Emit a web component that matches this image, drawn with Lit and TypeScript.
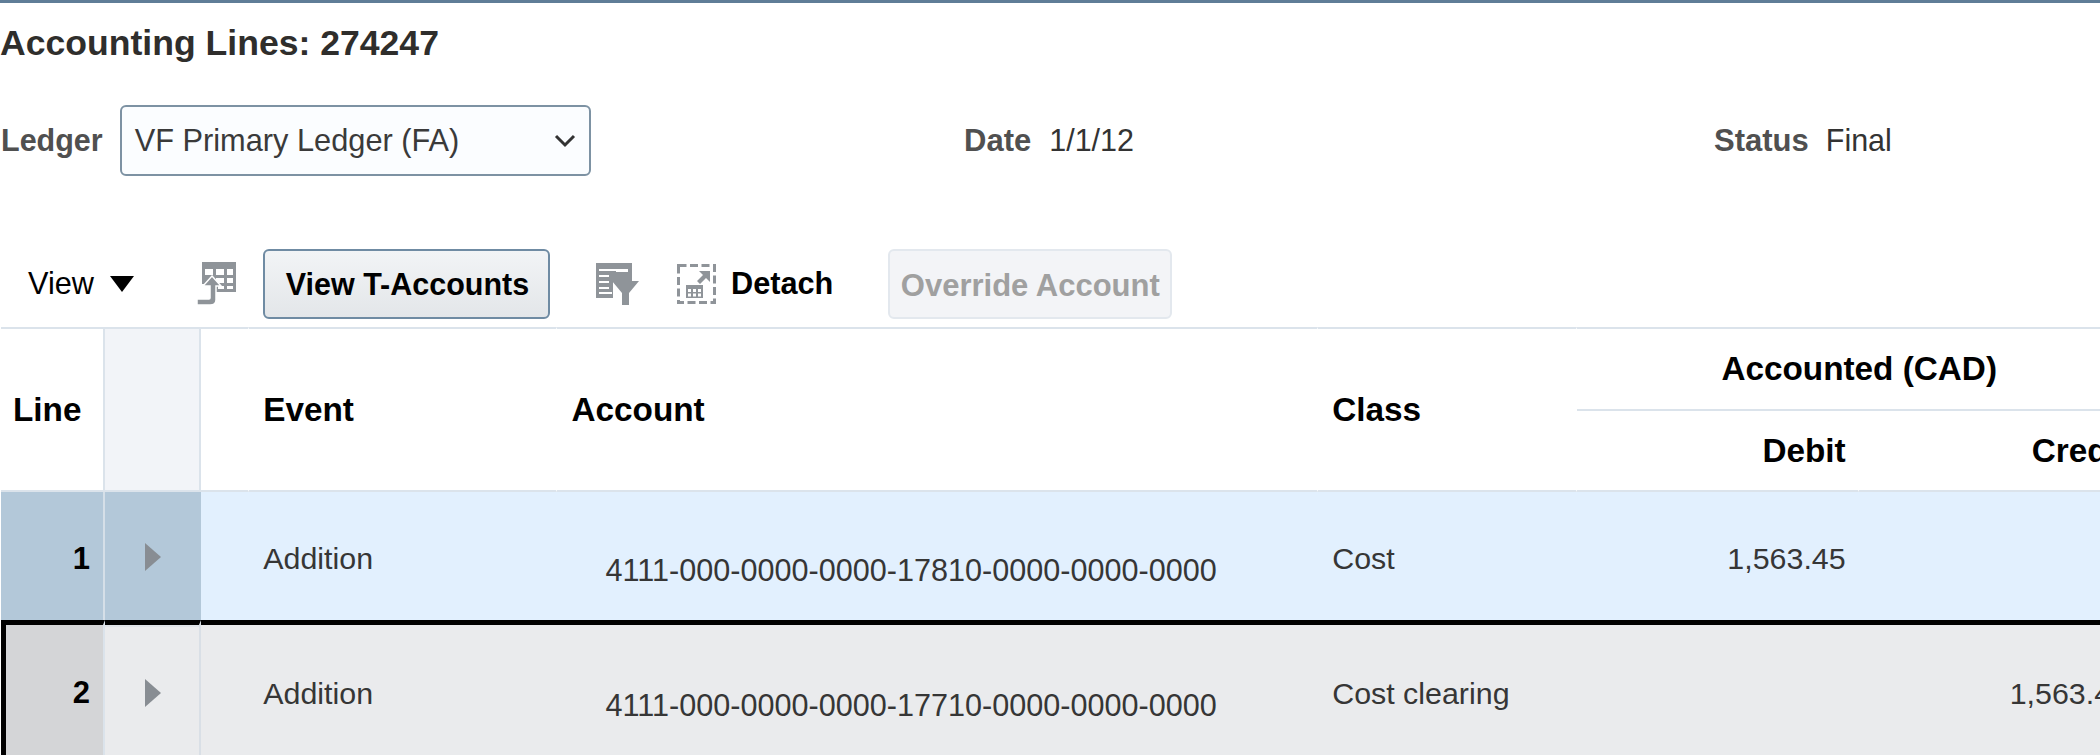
import { LitElement, html, css } from "lit";
import { customElement } from "lit/decorators.js";

const arrow = html`<svg class="tri" width="16" height="28" viewBox="0 0 16 28"><path d="M0 0L16 14L0 28Z" fill="#888d93"/></svg>`;

@customElement("app-root")
export class AppRoot extends LitElement {
  static styles = css`
    :host { display: block; width: 2100px; height: 755px; overflow: hidden; background: #fff; font-family: "Liberation Sans", Arial, sans-serif; color: #333; border-top: 3px solid #5f7d97; box-sizing: border-box; }
    h1 { margin: 0; height: 81px; padding-top: 20px; box-sizing: border-box; font-size: 35.6px; line-height: 41px; font-weight: 700; color: #2f2e2c; }
    .form { display: grid; grid-template-columns: 964px 750px 1fr; height: 70px; align-items: center; margin-top: 21px; font-size: 30.5px; }
    .field { display: flex; align-items: center; }
    .lbl { font-weight: 700; color: #505050; margin-right: 18px; font-size: 31px; }
    .first { padding-left: 1px; }
    .first .lbl { margin-right: 17px; font-size: 30.5px; }
    .status { margin-right: 17px; }
    .sel { width: 471px; height: 71px; box-sizing: border-box; border: 2px solid #7d92a3; border-radius: 6px; background: #fbfdff; display: flex; align-items: center; justify-content: space-between; padding: 0 12px 0 13px; color: #3a3a3a; font-size: 30.75px; }
    .bar { display: flex; align-items: center; height: 72px; margin-top: 73px; font-size: 30.7px; color: #000; }
    .view { margin-left: 28px; display: flex; align-items: center; gap: 16px; }
    .btn { box-sizing: border-box; height: 70px; display: flex; align-items: center; justify-content: center; font-weight: 700; border-radius: 6px; }
    .primary { width: 287px; border: 2px solid #6f8ba3; background: linear-gradient(#f2f4f6, #e3e6e9); margin-left: 27px; padding-left: 2px; font-size: 30.5px; }
    .disabled { width: 284px; border: 2px solid #e3e8ee; background: #f3f4f7; color: #a0a0a0; margin-left: 55px; padding-top: 3px; font-size: 31px; }
    .detach { font-weight: 700; margin-left: 15px; }
    .i1 { margin-left: 62px; }
    .i2 { margin-left: 46px; }
    .i3 { margin-left: 38px; }
    svg { display: block; flex: none; }
    svg.soft { filter: blur(0.4px); }
    table { border-collapse: separate; border-spacing: 0; table-layout: fixed; width: 2140px; margin: 7px 0 0 1px; font-size: 30.4px; }
    th { font-size: 33.3px; font-weight: 700; color: #000; text-align: left; padding: 0 14px; border-bottom: 2px solid #dbe3eb; border-right: 1px solid #fff; background: #fff; }
    thead tr:first-child th { border-top: 2px solid #dbe3eb; height: 80px; }
    thead tr:nth-child(2) th { height: 79px; text-align: right; padding-right: 12px; }
    th.group { text-align: center; border-right: none; }
    th.c-line { text-align: left; padding: 0 0 0 12px; border-right: 2px solid #dbe3eb; }
    th.c-exp { background: #f2f4f8; padding: 0; border-right: 2px solid #dbe3eb; }
    td { padding: 0 14px; height: 128px; box-sizing: border-box; vertical-align: middle; color: #363636; white-space: nowrap; }
    td .t { display: block; position: relative; top: 2px; }
    .acct { font-size: 30.6px; }
    .acct .t { padding-left: 34px; top: 14px; }
    .num { text-align: right; padding-right: 13px; }
    .r1 td { background: #e2f0fe; }
    .r1 td.line { background: #b3c8d9; border-right: 2px solid #d5dfe8; }
    .r1 td.exp { background: #b3c8d9; }
    .r2 td { background: #eaebed; border-top: 5px solid #000; height: 135px; }
    .r2 td .t { top: 3px; }
    .r2 td.acct .t { top: 15px; }
    .r2 td.line { background: #d4d5d7; border-left: 5px solid #000; border-right: 2px solid #dbe3eb; }
    .r2 td.exp { box-shadow: inset 0 2px 0 #dfe3e8; border-right: 2px solid #d9dfe6; }
    td.line { text-align: right; font-weight: 700; font-size: 31px; color: #000; padding: 0 13px 0 0; }
    td.line span { display: block; position: relative; top: 3px; }
    td.exp { padding: 0 0 0 40px; }
    .tri { position: relative; top: 1px; filter: blur(0.4px); }
    .r2 .tri { top: 3px; }
  `;

  render() {
    return html`
      <h1>Accounting Lines: 274247</h1>
      <div class="form">
        <div class="field first"><span class="lbl">Ledger</span>
          <div class="sel"><span>VF Primary Ledger (FA)</span>
            <svg width="24" height="16" viewBox="0 0 24 16"><path d="M3 3L12 12L21 3" fill="none" stroke="#333" stroke-width="3"/></svg>
          </div>
        </div>
        <div class="field"><span class="lbl">Date</span><span>1/1/12</span></div>
        <div class="field"><span class="lbl status">Status</span><span>Final</span></div>
      </div>
      <div class="bar">
        <div class="view"><span>View</span><svg class="soft" width="24" height="16" viewBox="0 0 24 16"><path d="M0 0H24L12 16Z" fill="#000"/></svg></div>
        <svg class="i1 soft" width="40" height="44" viewBox="0 0 40 44">
          <path d="M6 0H40V30H20V22H6Z" fill="#8f9499"/>
          <path d="M9 7h8v6h-8zM20 7h8v6h-8zM31 7h6v6h-6zM20 16h8v5h-8zM31 16h6v5h-6zM31 24h6v3h-6zM22 24h6v3h-6z" fill="#fff"/>
          <path d="M16 14L25 24H20V38Q20 43 14 43H1V37H13Q14 37 14 36V24H7Z" fill="#8f9499" stroke="#fff" stroke-width="1.5"/>
        </svg>
        <div class="btn primary">View T-Accounts</div>
        <svg class="i2 soft" width="43" height="42" viewBox="0 0 43 42">
          <path d="M0 0H36V18H17V35H0Z" fill="#8f9499"/>
          <path d="M3 6H32V9H20V8H3ZM3 12H13V14H3ZM3 18H13V20H3ZM3 24H13V26H3ZM3 29H16V31H3Z" fill="#fff"/>
          <path d="M16 18H43L33 30V42H26V30Z" fill="#8f9499"/>
        </svg>
        <svg class="i3 soft" width="39" height="40" viewBox="0 0 39 40">
          <path d="M1.500 1.500H37.500V38.500H1.500Z" fill="none" stroke="#8f9499" stroke-width="3" stroke-dasharray="8 3.5"/>
          <path d="M9 21H26V34H9Z" fill="#8f9499"/>
          <path d="M11 25h3v3h-3zM16 25h3v3h-3zM21 25h3v3h-3zM11 29.500h3v3h-3zM16 29.500h3v3h-3zM21 29.500h3v3h-3z" fill="#fff"/>
          <path d="M22 7H33V18L29 14L23 20L20 17L26 11Z" fill="#8f9499"/>
        </svg>
        <span class="detach">Detach</span>
        <div class="btn disabled">Override Account</div>
      </div>
      <table>
        <colgroup><col style="width:104px"/><col style="width:96px"/><col style="width:48px"/><col style="width:308px"/><col style="width:760px"/><col style="width:259px"/><col style="width:281px"/><col style="width:282px"/></colgroup>
        <thead>
          <tr>
            <th class="c-line" rowspan="2">Line</th>
            <th class="c-exp" rowspan="2"></th>
            <th rowspan="2"></th>
            <th rowspan="2">Event</th>
            <th rowspan="2">Account</th>
            <th rowspan="2">Class</th>
            <th class="group" colspan="2">Accounted (CAD)</th>
          </tr>
          <tr><th>Debit</th><th>Credit</th></tr>
        </thead>
        <tbody>
          <tr class="r1">
            <td class="line"><span>1</span></td><td class="exp">${arrow}</td><td></td>
            <td><span class="t">Addition</span></td>
            <td class="acct"><span class="t">4111-000-0000-0000-17810-0000-0000-0000</span></td>
            <td><span class="t">Cost</span></td>
            <td class="num"><span class="t">1,563.45</span></td><td></td>
          </tr>
          <tr class="r2">
            <td class="line"><span>2</span></td><td class="exp">${arrow}</td><td></td>
            <td><span class="t">Addition</span></td>
            <td class="acct"><span class="t">4111-000-0000-0000-17710-0000-0000-0000</span></td>
            <td><span class="t">Cost clearing</span></td>
            <td></td><td class="num"><span class="t">1,563.45</span></td>
          </tr>
        </tbody>
      </table>
    `;
  }
}
